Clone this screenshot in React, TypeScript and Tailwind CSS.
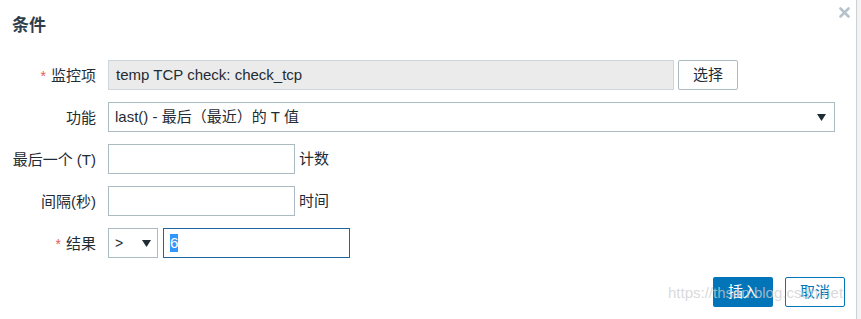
import React from "react";

const FONT = { fontFamily: '"Liberation Sans", Arial, "Noto Sans CJK SC", sans-serif' };

function Arrow() {
  return (
    <svg width="9" height="7" viewBox="0 0 9 7" className="shrink-0">
      <path d="M0 0 H9 L4.5 7 Z" fill="#1f2c33" />
    </svg>
  );
}

function Label({ text, req }: { text: string; req?: boolean }) {
  return (
    <div className="w-[96px] shrink-0 text-right text-[15px] text-[#1f2c33] leading-none">
      {req && <span className="text-[#e45959] mr-[5px] text-[14px]">*</span>}
      {text}
    </div>
  );
}

export default function App() {
  return (
    <div className="w-[861px] h-[319px] bg-white flex overflow-hidden relative" style={FONT}>
      <div className="w-[856px] shrink-0 relative">
        {/* close */}
        <svg width="11" height="11" viewBox="0 0 11 11" className="absolute left-[839px] top-[7px]">
          <path d="M1.5 1.5 L9.5 9.5 M9.5 1.5 L1.5 9.5" stroke="#b7c3cc" strokeWidth="2.6" strokeLinecap="round" />
        </svg>
        <div className="pl-[12px] pt-[15px] h-[60px]">
          <div className="text-[17px] font-bold text-[#2f3e4a] leading-[22px]">条件</div>
        </div>
        <div className="flex flex-col gap-[12px]">
          <div className="flex items-center gap-[12px] h-[30px]">
            <Label text="监控项" req />
            <div className="w-[566px] h-[30px] bg-[#ebebeb] border border-[#cfd6db] flex items-center pl-[7px] text-[15px] text-[#1f2c33]">
              temp TCP check: check_tcp
            </div>
            <div className="ml-[-8px] w-[60px] h-[30px] border border-[#acbbc2] rounded-[2px] flex items-center justify-center text-[15px] text-[#1f2c33]">
              选择
            </div>
          </div>
          <div className="flex items-center gap-[12px] h-[30px]">
            <Label text="功能" />
            <div className="w-[727px] h-[30px] border border-[#acbbc2] flex items-center justify-between pl-[6px] pr-[8px] text-[15px] text-[#1f2c33]">
              <span>last() - 最后（最近）的 T 值</span>
              <Arrow />
            </div>
          </div>
          <div className="flex items-center gap-[12px] h-[30px]">
            <Label text="最后一个 (T)" />
            <div className="w-[187px] h-[30px] border border-[#acbbc2]" />
            <span className="ml-[-8px] text-[15px] text-[#1f2c33]">计数</span>
          </div>
          <div className="flex items-center gap-[12px] h-[30px]">
            <Label text="间隔(秒)" />
            <div className="w-[187px] h-[30px] border border-[#acbbc2]" />
            <span className="ml-[-8px] text-[15px] text-[#1f2c33]">时间</span>
          </div>
          <div className="flex items-center gap-[12px] h-[30px]">
            <Label text="结果" req />
            <div className="flex items-center gap-[5px]">
              <div className="w-[50px] h-[30px] border border-[#acbbc2] flex items-center justify-between pl-[6px] pr-[6px] text-[14px] text-[#1f2c33]">
                <span>&gt;</span>
                <Arrow />
              </div>
              <div className="w-[187px] h-[30px] border border-[#1f65a0] flex items-center pl-[6px] text-[15px]">
                <span className="bg-[#3297fd] text-white leading-[18px]">6</span>
              </div>
            </div>
          </div>
        </div>
        <div className="flex justify-end gap-[12px] mt-[19px] pr-[11px]">
          <div className="w-[60px] h-[30px] bg-[#0275b8] rounded-[2px] flex items-center justify-center text-[15px] text-white">
            插入
          </div>
          <div className="w-[60px] h-[30px] border border-[#0275b8] rounded-[2px] flex items-center justify-center text-[15px] text-[#0275b8] bg-white">
            取消
          </div>
        </div>
        <div className="absolute left-[668px] top-[284px] text-[15px] leading-[18px] text-[rgba(205,205,205,0.75)] pointer-events-none whitespace-nowrap">
          https://thson.blog.csdn.net
        </div>
      </div>
      <div className="flex-1 border-l border-[#cdd2d6] bg-[#f3f3f3]" />
    </div>
  );
}
